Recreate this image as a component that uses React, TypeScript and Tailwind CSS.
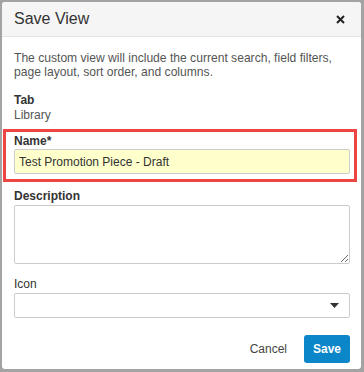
export default function App() {
  return (
    <div className="w-[364px] h-[372px] bg-[#a3a3a3] pt-[2px] pl-[2px]" style={{ fontFamily: '"Liberation Sans", Arial, sans-serif' }}>
      <div className="w-[359px] h-[367px] bg-white rounded-[3px] flex flex-col overflow-hidden">
        <div className="h-[35px] shrink-0 bg-[#f5f5f5] border-b border-[#e2e2e2] flex items-center justify-between pl-[12px] pr-[16px]">
          <h1 className="text-[16px] text-[#333] leading-none">Save View</h1>
          <svg width="9" height="9" viewBox="0 0 9 9" className="mt-[1px]">
            <path d="M1 1L8 8M8 1L1 8" stroke="#222" strokeWidth="2" />
          </svg>
        </div>

        <div className="pl-[12px] pt-[14px] text-[12px] text-[#555]">
          <p className="leading-[14px] pr-[8px] text-[12.1px]">
            The custom view will include the current search, field filters, page layout, sort order, and columns.
          </p>

          <div className="mt-[14px] leading-[15px]">
            <div className="font-bold text-[#333]">Tab</div>
            <div>Library</div>
          </div>

          <div className="mt-[6px] -ml-[11px] w-[354px] border-[3px] border-[#ef4444] pl-[8px] pb-[5px]">
            <label className="block font-bold text-[#333] leading-[16px] pt-px">Name*</label>
            <input
              type="text"
              defaultValue="Test Promotion Piece - Draft"
              className="block w-[336px] h-[25px] bg-[#ffffcc] border border-[#ccc] rounded-[2px] px-[4px] text-[12px] text-[#333] outline-none"
            />
          </div>

          <label className="block font-bold text-[#333] leading-[16px] mt-[6px]">Description</label>
          <textarea className="block mt-px w-[336px] h-[59px] border border-[#ccc] rounded-[2px] resize-y outline-none" />

          <label className="block text-[#333] leading-[16px] mt-[12px]">Icon</label>
          <div className="mt-px w-[336px] h-[25px] border border-[#ccc] rounded-[2px] flex items-center justify-end pr-[10px]">
            <svg width="9" height="5" viewBox="0 0 9 5">
              <path d="M0 0H9L4.5 5Z" fill="#333" />
            </svg>
          </div>

          <div className="mt-[17px] w-[336px] flex items-center justify-end gap-[17px]">
            <button className="text-[#444] text-[12px]">Cancel</button>
            <button className="w-[46px] h-[28px] rounded-[3px] bg-[#0b86c8] text-white font-bold text-[12px]">Save</button>
          </div>
        </div>
      </div>
    </div>
  )
}
